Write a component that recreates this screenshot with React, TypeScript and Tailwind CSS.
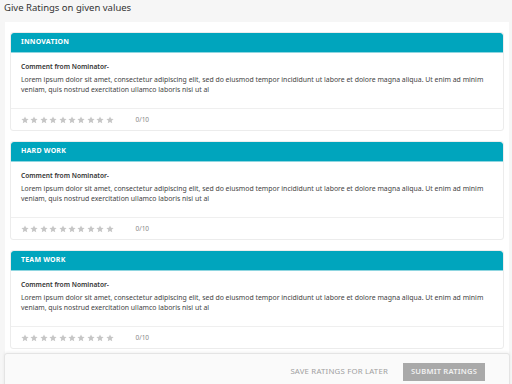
const values = ["INNOVATION", "HARD WORK", "TEAM WORK"];

const lorem =
  "Lorem ipsum dolor sit amet, consectetur adipiscing elit, sed do eiusmod tempor incididunt ut labore et dolore magna aliqua. Ut enim ad minim veniam, quis nostrud exercitation ullamco laboris nisi ut al";

const Star = () => (
  <svg width="8" height="8" viewBox="0 0 24 24" className="shrink-0">
    <path
      d="M12 1.5l3.2 7.1 7.6.7-5.8 5.1 1.8 7.6L12 18l-6.8 4 1.8-7.6-5.8-5.1 7.6-.7z"
      fill="#c6c6c6"
    />
  </svg>
);

const ValueCard = ({ title }: { title: string }) => (
  <div className="border border-[#ececec] rounded-[3px] overflow-hidden">
    <div className="h-[20px] bg-[#00a5bd] border-b border-[#8fd6e0] rounded-t-[3px] px-[10px] flex items-center text-white font-bold text-[7px] tracking-[0.2px]">
      {title}
    </div>
    <div className="h-[56px] px-[10px] pt-[9px] border-b border-[#efefef]">
      <p className="text-[6.6px] font-semibold text-[#333] leading-[9px]">
        Comment from Nominator-
      </p>
      <p className="mt-[4px] text-[6.9px] text-[#444] leading-[9.5px]">{lorem}</p>
    </div>
    <div className="h-[21px] px-[10px] flex items-center">
      <div className="flex gap-[1.4px]">
        {Array.from({ length: 10 }).map((_, i) => (
          <Star key={i} />
        ))}
      </div>
      <span className="ml-[22px] text-[6.5px] text-[#888]">0/10</span>
    </div>
  </div>
);

const App = () => {
  return (
    <div className="w-[512px] h-[384px] bg-[#f6f6f6] overflow-hidden relative font-['Noto_Sans',sans-serif]">
      <div className="h-[22px] px-[4px] pt-[1px] text-[9.5px] text-[#333]">
        Give Ratings on given values
      </div>
      <div className="ml-[5px] mr-[3px] bg-white px-[5px] pt-[10px] pb-[10px] flex flex-col gap-[10px]">
        {values.map((v) => (
          <ValueCard key={v} title={v} />
        ))}
      </div>
      <div className="absolute left-[4px] right-[2px] top-[353px] h-[40px] bg-[#fafafa] border border-[#e4e4e4] rounded-[3px] shadow-[0_-1px_3px_rgba(0,0,0,0.06)] flex items-start justify-end pt-[9px] pr-[24px]">
        <button className="h-[18px] px-[3px] text-[7.8px] text-[#a0a0a0] tracking-[0.2px]">
          SAVE RATINGS FOR LATER
        </button>
        <button className="ml-[12px] h-[18px] w-[82px] bg-[#a9a9a9] text-[7.6px] font-semibold text-[#f2f2f2] tracking-[0.2px]">
          SUBMIT RATINGS
        </button>
      </div>
    </div>
  );
};

export default App;
